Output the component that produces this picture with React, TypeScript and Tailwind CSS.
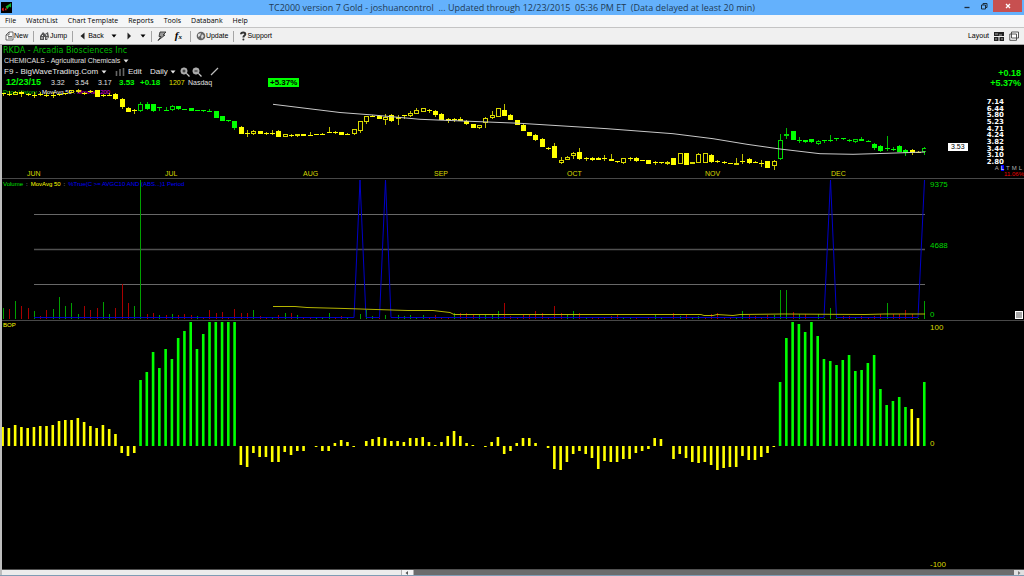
import type { ReactNode } from "react";
import clsx from "clsx";

type Candle = [high: number, top: number, bottom: number, low: number, hollow?: 1];

// one entry per trading day: high, body top, body bottom, low, hollow body
const candles: Candle[] = [
  [93, 93, 94, 96], [91, 94, 95, 96], [91, 92, 95, 95, 1], [91, 92, 94, 97], [93, 94, 95, 96],
  [92, 95, 96, 98], [92, 94, 95, 96], [93, 95, 96, 97], [92, 95, 96, 98], [94, 94, 95, 96],
  [93, 93, 94, 95], [90, 90, 93, 93, 1], [89, 90, 92, 93, 1], [92, 93, 94, 95], [90, 91, 92, 93],
  [90, 90, 97, 97], [94, 95, 96, 97], [93, 95, 96, 96], [93, 94, 99, 100], [98, 99, 107, 109],
  [107, 108, 112, 112], [109, 110, 111, 114], [102, 104, 111, 112, 1], [102, 104, 109, 110], [104, 104, 111, 112],
  [107, 107, 108, 111], [107, 110, 111, 111], [105, 106, 110, 111, 1], [106, 106, 109, 110], [109, 109, 110, 110],
  [108, 108, 111, 111], [110, 110, 111, 111], [110, 110, 111, 112], [109, 111, 112, 112], [111, 111, 118, 118],
  [116, 116, 121, 121], [120, 120, 121, 122], [121, 121, 128, 130], [126, 127, 134, 134], [130, 133, 134, 137],
  [130, 131, 134, 135, 1], [131, 131, 134, 134], [132, 133, 134, 135], [130, 133, 134, 135], [130, 131, 137, 137],
  [134, 134, 137, 137, 1], [134, 135, 136, 137], [134, 134, 136, 137, 1], [134, 134, 136, 136], [132, 135, 136, 136],
  [134, 134, 135, 135], [133, 134, 135, 135], [127, 132, 133, 133], [131, 132, 133, 134], [132, 132, 135, 135],
  [133, 134, 135, 135], [129, 129, 134, 135, 1], [121, 121, 131, 133, 1], [116, 116, 122, 124, 1], [115, 116, 117, 117],
  [115, 116, 119, 119], [114, 117, 120, 125, 1], [114, 115, 121, 122], [115, 117, 118, 125, 1], [115, 115, 116, 119],
  [111, 113, 116, 117, 1], [108, 110, 114, 114, 1], [108, 108, 112, 112, 1], [109, 110, 111, 113], [110, 111, 115, 117],
  [113, 114, 120, 120], [118, 119, 121, 123], [118, 119, 120, 122], [117, 119, 121, 121], [120, 121, 124, 125],
  [124, 124, 128, 128], [125, 125, 128, 129, 1], [117, 118, 123, 128, 1], [111, 115, 118, 119, 1], [108, 108, 117, 117, 1],
  [104, 110, 116, 116], [114, 115, 120, 120], [120, 120, 125, 125], [124, 125, 131, 131], [132, 132, 136, 136],
  [134, 135, 140, 141], [138, 139, 147, 147], [147, 148, 149, 150], [143, 146, 158, 158], [157, 160, 163, 164, 1],
  [156, 157, 160, 160, 1], [152, 153, 156, 159, 1], [148, 152, 159, 160], [157, 158, 159, 161], [157, 158, 160, 161],
  [157, 158, 160, 160], [155, 158, 159, 161], [154, 159, 161, 161], [161, 161, 162, 163], [158, 158, 163, 164, 1],
  [157, 158, 159, 161], [157, 158, 161, 162], [160, 160, 161, 161], [160, 160, 164, 164], [161, 162, 163, 165],
  [162, 162, 163, 164], [161, 162, 164, 165, 1], [158, 158, 165, 165], [153, 153, 164, 164, 1], [153, 153, 165, 165],
  [162, 162, 164, 164, 1], [153, 154, 163, 163, 1], [153, 153, 163, 163, 1], [154, 155, 162, 163], [160, 161, 162, 163],
  [161, 162, 163, 164], [163, 163, 164, 164], [158, 163, 165, 165, 1], [154, 161, 162, 164], [158, 159, 163, 164],
  [161, 162, 163, 163], [160, 163, 164, 167], [161, 161, 168, 168], [160, 161, 166, 170, 1], [134, 140, 159, 160, 1],
  [128, 134, 136, 139, 1], [131, 131, 140, 140], [137, 140, 141, 143], [140, 140, 142, 143], [139, 139, 142, 143],
  [140, 141, 144, 145, 1], [140, 140, 141, 143], [135, 140, 141, 142], [138, 138, 139, 141], [138, 138, 139, 140],
  [139, 140, 141, 142], [139, 139, 142, 143, 1], [137, 139, 141, 141], [140, 141, 142, 142], [143, 144, 148, 150],
  [145, 146, 151, 152], [136, 148, 149, 151], [147, 149, 150, 151], [145, 146, 152, 152], [149, 150, 153, 156],
  [149, 150, 153, 155], [151, 152, 153, 153], [147, 148, 152, 155, 1],
];

// negative = down day
const volume = [
  11, -10, 18, -13, -11, 8, -3, -9, 10, 22, 13, 16, 5, -13, -9, -11, 17, 5, -11, -35,
  -16, 13, 139, -5, -6, 4, -4, 5, -4, -5, -4, 3, -1, -9, -6, -7, -1, -10, -6, -6,
  9, -3, -2, 1, -4, 6, -6, 4, -1, -1, 2, 1, 6, -2, -3, 1, 0, 5, 9, 3,
  -1, 4, 0, 4, 3, 4, 1, 4, -2, -4, -1, -1, 6, -6, -6, -5, 4, 4, 5, 8,
  -16, -3, -1, -4, -4, -8, -6, -2, -13, -6, 4, 8, -6, 2, -1, -2, -2, -3, -4, 1,
  2, -1, 0, -1, 4, 1, 0, -6, 3, -5, 1, 3, -2, -5, -6, -1, -2, 2, 8, -4,
  -3, -2, -4, 4, 29, 29, -7, 5, -5, 0, 5, 1, 11, 1, -3, -3, 1, -3, -1, -3,
  -5, 16, -5, -5, -9, -5, 1, 18,
];

const bop = [
  19, 18, 21, 19, 18, 19, 20, 20, 21, 25, 26, 26, 28, 24, 20, 18, 21, 17, 12, -7,
  -10, -7, 66, 74, 94, 78, 97, 87, 108, 115, 124, 97, 112, 124, 124, 124, 124, 124, -19, -21,
  -7, -11, -11, -16, -16, -6, -9, -5, -5, 0, -1, -5, -5, 3, 6, 4, -1, 0, 5, 7,
  9, 8, 5, 5, 4, 8, 8, 9, 4, 1, 4, 10, 15, 10, 3, 1, 0, -1, 4, 9,
  -8, -5, 3, 8, 8, 3, 0, -2, -23, -24, -16, -8, -5, -8, -12, -23, -15, -16, -16, -13,
  -13, -7, -5, -3, 8, 7, 0, -13, -8, -12, -16, -17, -16, -19, -24, -22, -21, -21, -10, -14,
  -14, -11, -7, -1, 64, 108, 124, 122, 114, 124, 110, 87, 85, 81, 86, 91, 75, 76, 83, 91,
  57, 41, 45, 49, 39, 37, 28, 64,
];

const months = ["JUN", "JUL", "AUG", "SEP", "OCT", "NOV", "DEC"];
const prices = ["7.14", "6.44", "5.80", "5.23", "4.71", "4.24", "3.82", "3.44", "3.10", "2.80"];
const menus = ["File", "WatchList", "Chart Template", "Reports", "Tools", "Databank", "Help"];

const dayX = (i: number) => 2.5 + i * 6.27;
const isStrong = (i: number) => (i >= 22 && i <= 37) || (i >= 124 && i !== 145 && i !== 146);
const barColor = (i: number) => (isStrong(i) ? "#00ff00" : "#ffff00");

function Caret({ className }: { className?: string }) {
  return (
    <svg viewBox="0 0 6 4" className={clsx("h-[4px] w-[6px] shrink-0 fill-current", className)}>
      <path d="M0.5 0.5H5.5L3 3.5Z" />
    </svg>
  );
}

function Dropdown({ label, value, className }: { label: string; value: string; className?: string }) {
  return (
    <span className={clsx("flex items-center gap-[2px]", className)}>
      <select aria-label={label} className="appearance-none bg-transparent p-0 [&>option]:text-black">
        <option>{value}</option>
      </select>
      <Caret />
    </span>
  );
}

function ToolButton({ label, children }: { label: string; children?: ReactNode }) {
  return (
    <button type="button" className="flex items-center">
      {children}
      {label}
    </button>
  );
}

function Divider() {
  return <span className="h-[11px] w-px shrink-0 bg-[#a5a5a5]" />;
}

function Zoomer({ sign }: { sign: string }) {
  return (
    <svg viewBox="0 0 10 10" className="size-[10px]" fill="none">
      <circle cx="4" cy="4" r="3.2" fill="#a8a8a8" stroke="#b8b8b8" strokeWidth="0.6" />
      <path d={sign} stroke="#222" />
      <path d="M6.4 6.4L9.5 9.5" stroke="#c8c8c8" strokeWidth="1.3" />
    </svg>
  );
}

function TitleBar() {
  return (
    <header className="relative flex h-[15px] items-center justify-center bg-[#64b1fc] font-['Open_Sans',sans-serif] text-[9px] leading-[15px] text-[#1f3c56]">
      <svg viewBox="0 0 12 12" className="absolute left-[1px] top-[2px] size-[11px]">
        <rect width="12" height="12" fill="#000" />
        <path d="M1 7L3 6L3 10L1 9ZM4 9L6 5L6 9Z" fill="#e02020" />
        <path d="M5 5L8 3L11 1V6L9 5L7 8Z" fill="#10b030" />
      </svg>
      <h1 className="whitespace-pre">
        {"TC2000 version 7 Gold - joshuancontrol  ... Updated through 12/23/2015  05:36 PM ET  (Data delayed at least 20 min)"}
      </h1>
      <div className="absolute right-[2px] top-0 flex h-[12px]">
        <button type="button" aria-label="Minimize" className="grid w-[16px] place-items-center">
          <svg viewBox="0 0 8 8" className="size-[8px]">
            <path d="M1.5 5.5H6.5" stroke="#1b2c3c" strokeWidth="1.3" />
          </svg>
        </button>
        <button type="button" aria-label="Restore" className="grid w-[18px] place-items-center">
          <svg viewBox="0 0 8 8" className="size-[8px]" fill="none" stroke="#1b2c3c">
            <path d="M1.5 3H5.5V7H1.5ZM3 3V1.5H7V5.5H5.5" />
          </svg>
        </button>
        <button type="button" aria-label="Close" className="grid w-[29px] place-items-center bg-[#c75050]">
          <svg viewBox="0 0 6 6" className="size-[6px]">
            <path d="M1 1L5 5M5 1L1 5" stroke="#fff" strokeWidth="1.3" />
          </svg>
        </button>
      </div>
    </header>
  );
}

function MenuBar() {
  return (
    <nav className="flex h-[13px] items-center gap-[10px] border-b border-[#c4c4c4] bg-[#f5f6f7] pl-[5px] font-['Open_Sans',sans-serif] text-[7px] font-medium leading-[12px] text-black">
      {menus.map((m) => (
        <button type="button" key={m}>
          {m}
        </button>
      ))}
    </nav>
  );
}

function Toolbar() {
  return (
    <div className="flex h-[17px] items-center justify-between border-b border-[#a8a8a8] bg-[#f0f0f0] pl-[5px] pr-[5px] text-[7px] leading-[8px] text-black">
      <div className="flex items-center gap-[5px]">
        <ToolButton label="New">
          <svg viewBox="0 0 9 10" className="h-[10px] w-[9px]" fill="#fff" stroke="#444" strokeWidth="0.8">
            <path d="M1 9V4L4 1H8V9ZM4 1V4H1M3 5.5H7M3 7H7" />
          </svg>
        </ToolButton>
        <Divider />
        <ToolButton label="Jump">
          <svg viewBox="0 0 11 10" className="h-[10px] w-[11px]">
            <path d="M1 5L4 1L6 3L9 1L10 6L8 9H6V6H5V9H1Z" fill="#555" />
            <path d="M3 4L4 5M7 3L8 5M2 7H4M8 6V8" stroke="#eee" />
          </svg>
        </ToolButton>
        <Divider />
        <ToolButton label="Back">
          <svg viewBox="0 0 10 8" className="h-[8px] w-[10px]">
            <path d="M6.5 0.5V7.5L2.5 4Z" fill="#222" />
          </svg>
        </ToolButton>
        <button type="button" aria-label="Back history" className="w-[9px] pl-[2px]">
          <Caret />
        </button>
        <button type="button" aria-label="Forward" className="ml-[3px] w-[9px]">
          <svg viewBox="0 0 6 8" className="h-[8px] w-[6px]">
            <path d="M1.5 0.5V7.5L5 4Z" fill="#222" />
          </svg>
        </button>
        <button type="button" aria-label="Forward history">
          <Caret />
        </button>
        <Divider />
        <button type="button" aria-label="Scan">
          <svg viewBox="0 0 10 10" className="size-[10px]" fill="#999" stroke="#333" strokeWidth="0.9">
            <path d="M3 1H9L6 4H8L1 9.5L4 5.5H2Z" />
          </svg>
        </button>
        <button type="button" aria-label="Formula" className="px-[3px] font-['Liberation_Serif',serif] text-[11px] font-bold italic">
          f<span className="text-[7px]">x</span>
        </button>
        <Divider />
        <ToolButton label="Update">
          <svg viewBox="0 0 10 10" className="size-[10px]">
            <circle cx="5" cy="5" r="4.3" fill="#666" />
            <path d="M2 3L5 2L4 5L2 6M6 3L8 5L6 8L5 6Z" fill="#ddd" />
          </svg>
        </ToolButton>
        <Divider />
        <ToolButton label="Support">
          <svg viewBox="0 0 8 10" className="h-[10px] w-[8px]" fill="none">
            <path d="M2 3.2C2 0.8 6.3 0.8 6.3 3.2C6.3 4.6 4.4 4.6 4.4 6.4" stroke="#333" strokeWidth="2" />
            <circle cx="4.4" cy="8.6" r="1" fill="#333" />
          </svg>
        </ToolButton>
      </div>
      <div className="flex items-center gap-[5px]">
        <span>Layout</span>
        <button type="button" aria-label="Layout grid">
          <svg viewBox="0 0 10 9" className="h-[9px] w-[10px]">
            <path d="M0 0H10V4H0ZM0 5H4.5V9H0ZM5.5 5H10V9H5.5Z" fill="#222" />
            <path d="M1 2H4M5 3H8M2 6V8M7 7H9" stroke="#ccc" strokeWidth="0.8" />
          </svg>
        </button>
        <button type="button" aria-label="Windows">
          <svg viewBox="0 0 10 10" className="size-[10px]" fill="#fff" stroke="#444" strokeWidth="0.9">
            <path d="M2.5 1H9.5V7H2.5ZM0.8 3H7.5V9.3H0.8Z" />
          </svg>
        </button>
      </div>
    </div>
  );
}

function PricePanel() {
  return (
    <section className="flex border-b border-[#484848]">
      <div className="min-w-0 flex-1">
        <h2 className="pl-px font-['DejaVu_Sans',sans-serif] text-[8px] leading-[11px] text-[#00b800]">RKDA - Arcadia Biosciences Inc</h2>
        <Dropdown label="Industry" value="CHEMICALS - Agricultural Chemicals" className="h-[10px] pl-[2px] text-[7px] leading-[10px] text-[#e0e0e0]" />
        <div className="flex h-[11px] items-center pl-[2px] text-[7px] leading-[11px] text-[#e8e8e8]">
          <Dropdown label="Template" value="F9 - BigWaveTrading.Com" className="w-[111px] text-[8px]" />
          <button type="button" className="flex w-[35px] items-center gap-[3px] text-[8px]">
            <svg viewBox="0 0 10 8" className="h-[8px] w-[10px]">
              <path d="M1.5 3V8M5 1V8M8.5 0V8" stroke="#666" strokeWidth="1.6" />
            </svg>
            Edit
          </button>
          <Dropdown label="Period" value="Daily" className="w-[30px] text-[8px]" />
          <button type="button" aria-label="Zoom in" className="w-[12px]">
            <Zoomer sign="M2.5 4H5.5M4 2.5V5.5" />
          </button>
          <button type="button" aria-label="Zoom out" className="w-[18px]">
            <Zoomer sign="M2.5 4H5.5" />
          </button>
          <button type="button" aria-label="Draw">
            <svg viewBox="0 0 9 9" className="size-[9px]">
              <path d="M1 8L8 1" stroke="#bdbdbd" strokeWidth="1.3" />
            </svg>
          </button>
        </div>
        <div className="grid h-[11px] grid-cols-[45px_24px_23px_21px_21px_29px_19px_80px_auto] items-center justify-start pl-[4px] text-[7px] leading-[11px] text-[#e0e0e0]">
          <b className="text-[9px] text-[#00ff00]">12/23/15</b>
          <span>3.32</span>
          <span>3.54</span>
          <span>3.17</span>
          <b className="text-[8px] text-[#00ff00]">3.53</b>
          <b className="text-[8px] text-[#00ff00]">+0.18</b>
          <span className="text-[#e0e000]">1207</span>
          <span>Nasdaq</span>
          <b className="bg-[#00ff00] px-[2px] text-[8px] leading-[9px] text-black">+5.37%</b>
        </div>
        <div className="relative">
          <p className="absolute left-px top-0 whitespace-nowrap text-[6px] leading-[9px]">
            <span className="text-[#00c000]">Price History</span> <span className="text-white">: MovAvg 50 :</span>{" "}
            <span className="text-[#e000e0]">MovAvg 200</span>
          </p>
          <svg viewBox="2 88 924 82" preserveAspectRatio="none" className="relative block h-[82px] w-full">
            {candles.map(([high, top, bottom, low, hollow], i) => {
              const x = Math.round(dayX(i));
              const color = barColor(i);
              return (
                <g key={i} stroke={color} strokeWidth="1">
                  <path d={`M${x + 0.5} ${high}V${top}M${x + 0.5} ${bottom}V${low}`} strokeOpacity="0.75" />
                  {hollow ? (
                    <rect x={x - 1.5} y={top + 0.5} width="4" height={Math.max(bottom - top - 1, 1)} fill="none" strokeOpacity="0.85" />
                  ) : (
                    <rect x={x - 2} y={top} width="5" height={bottom - top} fill={color} stroke="none" />
                  )}
                </g>
              );
            })}
            <polyline
              points="273,104.3 340,112.5 373,115 420,119.3 520,123.3 607,128.7 673,133.7 713,138.7 747,144.3 780,149 820,153.7 853,154.3 887,153.3 925,152"
              fill="none"
              stroke="#c8c8c8"
            />
          </svg>
        </div>
        <div className="grid h-[8px] grid-cols-[138fr_138fr_131fr_133fr_138fr_126fr_95fr] pl-[25px] text-[7px] leading-[7px] text-[#d8d800]">
          {months.map((m) => (
            <span key={m}>{m}</span>
          ))}
        </div>
      </div>
      <aside className="relative w-[98px] shrink-0">
        <div className="pr-[3px] pt-[23px] text-right text-[9px] font-bold leading-[10px] text-[#00ff00]">
          <p>+0.18</p>
          <p>+5.37%</p>
        </div>
        <ol className="mr-[20px] mt-[11px] flex h-[66px] flex-col justify-between text-right font-['DejaVu_Sans',sans-serif] text-[7px] font-bold leading-[6px] text-white">
          {prices.map((p) => (
            <li key={p}>{p}</li>
          ))}
        </ol>
        <div className="flex justify-end gap-[2px] pr-[2px] text-[6px] leading-[6px] text-[#b0b0b0]">
          <span>A</span>
          <span className="bg-[#0000ff] text-white">L</span>
          <span>T</span>
          <span>M</span>
          <span>L</span>
        </div>
        <p className="text-right text-[6px] leading-[6px] text-[#f00000]">11.06%</p>
        <span className="absolute left-[22px] top-[98px] bg-white px-[3px] text-[7px] leading-[8px] text-black">3.53</span>
      </aside>
    </section>
  );
}

function VolumePanel() {
  return (
    <section className="flex h-[142px] border-b border-[#484848]">
      <div className="relative min-w-0 flex-1">
        <p className="absolute left-px top-px flex gap-[3px] whitespace-nowrap text-[6px] leading-[8px]">
          <span className="text-[#00e000]">Volume</span>
          <span className="text-[#c0c0c0]">:</span>
          <span className="text-[#ffff00]">MovAvg 50</span>
          <span className="text-[#c0c0c0]">:</span>
          <span className="text-[#0000ff]">{"%True(C >= AVGC10 AND (ABS...)1 Period"}</span>
        </p>
        <svg viewBox="2 179 924 141" preserveAspectRatio="none" className="relative block h-[141px] w-full" fill="none">
          <path d="M34 214.5H925M34 284.5H925" stroke="#686868" />
          <path d="M34 249.5H925" stroke="#505050" strokeWidth="1.5" />
          {volume.map((v, i) => (
            <rect key={i} x={Math.round(dayX(i))} y={319 - Math.abs(v)} width="1" height={Math.abs(v)} fill={v > 0 ? "#00a000" : "#a80000"} />
          ))}
          <polyline
            points="34,317.5 354,317.5 360,180 366,317.5 379.5,317.5 385.5,180 391,317.5 824,317.5 830.5,180 836.5,317.5 918,317.5 924.5,180"
            stroke="#0000c8"
          />
          <polyline
            points="273,306.5 295,306.5 307,307.5 345,308.5 376,309.5 408,310.5 433,310.5 450,312.5 454,314.5 701,314.5 704,315.5 713,315.5 717,314.5 733,315.5 740,314.5 784,314 865,314.5 884,314 925,314"
            stroke="#b4b400"
          />
        </svg>
      </div>
      <aside className="flex w-[98px] shrink-0 justify-between pl-[4px] text-[8px] leading-[9px] text-[#00d800]">
        <div className="grid grid-rows-[61fr_69fr_10fr] pt-px">
          <span>9375</span>
          <span>4688</span>
          <span>0</span>
        </div>
        <button type="button" aria-label="Resize panel" className="mb-px mr-px size-[8px] self-end border border-white bg-[#a8a8a8]" />
      </aside>
    </section>
  );
}

function BopPanel() {
  return (
    <section className="flex h-[248px]">
      <div className="relative min-w-0 flex-1">
        <p className="absolute left-px top-0 text-[6px] leading-[9px] text-[#ffff00]">BOP</p>
        <svg viewBox="2 321 924 248" preserveAspectRatio="none" className="relative block h-[248px] w-full">
          {bop.map((v, i) => (
            <rect key={i} x={dayX(i) - 1.2} y={v > 0 ? 446 - v : 446} width="2.6" height={Math.abs(v)} fill={barColor(i)} />
          ))}
        </svg>
      </div>
      <aside className="grid w-[98px] shrink-0 grid-rows-[116fr_121fr_9fr] pl-[4px] pt-[2px] text-[8px] leading-[9px] text-[#d8d800]">
        <span>100</span>
        <span>0</span>
        <span>-100</span>
      </aside>
    </section>
  );
}

function ScrollBar() {
  return (
    <div className="flex h-[6px] border-t border-[#505050] bg-[#6c6c6c]">
      <div className="w-[39%] bg-[#ececec]" />
      <button type="button" aria-label="Scroll left" className="grid w-[13px] place-items-center border-x border-[#b0b0b0] bg-[#f4f4f4]">
        <svg viewBox="0 0 4 4" className="size-[4px]">
          <path d="M3 0V4L0.5 2Z" fill="#555" />
        </svg>
      </button>
      <div className="flex-1" />
      <button type="button" aria-label="Scroll right" className="grid w-[10px] place-items-center bg-[#e0e0e0]">
        <svg viewBox="0 0 4 4" className="size-[4px]">
          <path d="M1 0V4L3.5 2Z" fill="#777" />
        </svg>
      </button>
    </div>
  );
}

export default function App() {
  return (
    <div className="min-h-screen bg-black font-['Liberation_Sans',sans-serif]">
      <TitleBar />
      <MenuBar />
      <Toolbar />
      <main className="border-l-2 border-[#bdbdbd]">
        <PricePanel />
        <VolumePanel />
        <BopPanel />
        <ScrollBar />
      </main>
      <div className="h-px bg-[#7f9cb4]" />
    </div>
  );
}
